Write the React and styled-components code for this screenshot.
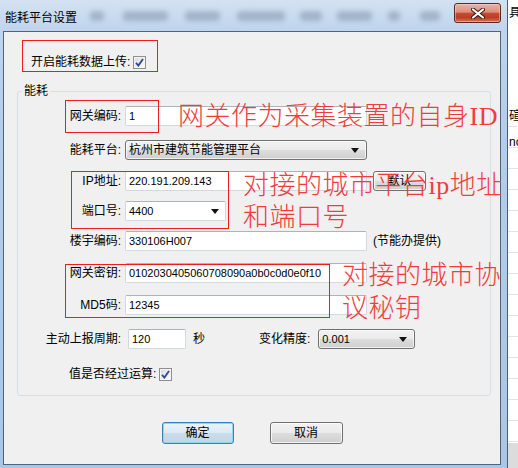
import React from 'react'
import styled, { createGlobalStyle } from 'styled-components'

const GlobalStyle = createGlobalStyle`
  html, body {
    margin: 0;
    padding: 0;
  }
  body {
    width: 518px;
    height: 468px;
    overflow: hidden;
    background: #fff;
  }
`

const UI_FONT = `"Liberation Sans", "Noto Sans CJK SC", sans-serif`
const NOTE_FONT = `"Liberation Serif", "Noto Sans CJK SC", serif`

const Desktop = styled.div`
  position: relative;
  width: 518px;
  height: 468px;
  display: flex;
  overflow: hidden;
  font-family: ${UI_FONT};
  font-size: 12px;
  color: #000;
`

const Window = styled.div`
  flex: none;
  width: 508px;
  height: 468px;
  box-sizing: border-box;
  display: flex;
  flex-direction: column;
  padding: 0 6px 3px 3px;
  border-right: 1px solid #4c5e73;
  background: linear-gradient(180deg, #d3e2f2 0%, #bfd5ed 30px, #b4cdea 120px, #aac6e6 100%);
`

const TitleBar = styled.div`
  flex: none;
  height: 31px;
  display: flex;
  align-items: flex-start;
`

const TitleText = styled.span`
  margin: 10px 0 0 2px;
  font-size: 12px;
  line-height: 16px;
  white-space: nowrap;
`

const Blob = styled.span`
  flex: none;
  width: ${({ $w }) => $w}px;
  margin: 11px 0 0 ${({ $ml }) => $ml}px;
  height: 10px;
  border-radius: 4px;
  background: rgba(55, 70, 95, 0.26);
  filter: blur(2.5px);
`

const CloseButton = styled.div`
  flex: none;
  margin: 3px 0 0 auto;
  width: 47px;
  height: 20px;
  box-sizing: border-box;
  border: 1px solid #5a2a1e;
  border-radius: 3px;
  display: flex;
  align-items: center;
  justify-content: center;
  background: linear-gradient(180deg, #eab3a4 0%, #dc8f7d 45%, #c54a32 52%, #c03c24 75%, #d8735a 100%);
  box-shadow: inset 0 0 0 1px rgba(255, 220, 210, 0.45);
`

const Client = styled.div`
  flex: 1;
  display: flex;
  flex-direction: column;
  border: 1px solid #4f637b;
  background: #f0f0f0;
`

const UploadRow = styled.div`
  display: flex;
  align-items: center;
  height: 16px;
  margin: 22px 0 0 27px;
  gap: 3px;
`

const Text = styled.span`
  font-size: 12px;
  line-height: 16px;
  white-space: nowrap;
`

const CheckBox = styled.span`
  flex: none;
  width: 13px;
  height: 13px;
  box-sizing: border-box;
  border: 1px solid #8e8f8f;
  display: flex;
  align-items: center;
  justify-content: center;
  background: linear-gradient(135deg, #d6d8db 0%, #eef0f2 60%, #fafafa 100%);
  box-shadow: inset 0 0 0 1px #f4f4f4;
`

const GroupBox = styled.fieldset`
  margin: 13px 9px 0 13px;
  padding: 7px 0 11px 0;
  border: 1px solid #d5dfe5;
  border-radius: 3px;
  min-width: 0;
`

const Legend = styled.legend`
  margin-left: 4px;
  padding: 0 2px;
  font-size: 12px;
  line-height: 16px;
`

const Row = styled.div`
  display: flex;
  align-items: center;
  height: 20px;
  margin-top: ${({ $mt }) => $mt || 0}px;
  padding-left: ${({ $pl }) => $pl || 0}px;
`

const Label = styled.span`
  flex: none;
  width: 103px;
  text-align: right;
  font-size: 12px;
  line-height: 16px;
  white-space: nowrap;
`

const Field = styled.div`
  flex: none;
  width: ${({ $w }) => $w}px;
  height: 20px;
  margin-left: ${({ $ml }) => ($ml === undefined ? 4 : $ml)}px;
  box-sizing: border-box;
  display: flex;
  align-items: center;
  justify-content: space-between;
  padding: 0 6px 0 3px;
  background: #fff;
  border: 1px solid #d3d7de;
  border-top-color: #aeb2b9;
  border-radius: 2px;
  font-size: ${({ $cjk }) => ($cjk ? 12 : 11)}px;
  line-height: 16px;
  white-space: nowrap;
  overflow: hidden;
`

const DropList = styled.div`
  flex: none;
  width: ${({ $w }) => $w}px;
  height: 20px;
  margin-left: ${({ $ml }) => ($ml === undefined ? 4 : $ml)}px;
  box-sizing: border-box;
  display: flex;
  align-items: center;
  justify-content: space-between;
  padding: 0 7px 0 3px;
  border: 1px solid #707070;
  border-radius: 3px;
  background: linear-gradient(180deg, #f2f2f2 0%, #ebebeb 50%, #dddddd 51%, #cfcfcf 100%);
  box-shadow: inset 0 0 0 1px rgba(255, 255, 255, 0.7);
  font-size: ${({ $cjk }) => ($cjk ? 12 : 11)}px;
  line-height: 16px;
  white-space: nowrap;
`

const Button = styled.div`
  flex: none;
  width: ${({ $w }) => $w}px;
  height: ${({ $h }) => $h || 21}px;
  margin-left: ${({ $ml }) => $ml || 0}px;
  box-sizing: border-box;
  display: flex;
  align-items: center;
  justify-content: center;
  border: 1px solid ${({ $primary }) => ($primary ? '#3c7fb1' : '#707070')};
  border-radius: 3px;
  background: ${({ $primary }) =>
    $primary
      ? 'linear-gradient(180deg, #eaf4fb 0%, #dde9f2 50%, #cbdce9 51%, #c2d6e6 100%)'
      : 'linear-gradient(180deg, #f2f2f2 0%, #ebebeb 50%, #dddddd 51%, #cfcfcf 100%)'};
  box-shadow: ${({ $primary }) =>
    $primary ? 'inset 0 0 0 1px #8fd3f6' : 'inset 0 0 0 1px rgba(255, 255, 255, 0.75)'};
  font-size: 12px;
  line-height: 16px;
  white-space: nowrap;
`

const Aside = styled.span`
  margin-left: ${({ $ml }) => $ml}px;
  font-size: 12px;
  line-height: 16px;
  white-space: nowrap;
`

const ButtonRow = styled.div`
  display: flex;
  justify-content: center;
  gap: 36px;
  margin-top: 26px;
`

const BackApp = styled.div`
  flex: 1;
  display: flex;
  flex-direction: column;
  background:
    linear-gradient(180deg, transparent 443px, #dcdcdc 443px),
    repeating-linear-gradient(180deg, transparent 0, transparent 20px, #e3e3e3 20px, #e3e3e3 21px) 0 106px / 100% 100% no-repeat,
    #fff;
  font-size: 12px;
  line-height: 14px;
  overflow: hidden;
  white-space: nowrap;
`

const BackCell = styled.span`
  margin-top: ${({ $mt }) => $mt}px;
  padding-left: 1px;
`

const RedBox = styled.div`
  position: absolute;
  left: ${({ $x }) => $x}px;
  top: ${({ $y }) => $y}px;
  width: ${({ $w }) => $w}px;
  height: ${({ $h }) => $h}px;
  box-sizing: border-box;
  border: 1px solid #f01c1c;
  pointer-events: none;
`

const Note = styled.div`
  position: absolute;
  left: ${({ $x }) => $x}px;
  top: ${({ $y }) => $y}px;
  font-family: ${NOTE_FONT};
  font-size: 26px;
  font-weight: 300;
  line-height: ${({ $lh }) => $lh || 32}px;
  letter-spacing: 0.5px;
  color: #f03c3c;
  white-space: nowrap;
  pointer-events: none;
`

const Arrow = () => (
  <svg width="8" height="5" viewBox="0 0 8 5">
    <polygon points="0,0 8,0 4,5" fill="#111" />
  </svg>
)

const Tick = () => (
  <CheckBox>
    <svg width="9" height="9" viewBox="0 0 9 9">
      <path d="M1 4.8 L3.4 7.6 L8 1" fill="none" stroke="#2c4a98" strokeWidth="1.8" />
    </svg>
  </CheckBox>
)

const blobs = [
  { w: 14, ml: 13 },
  { w: 45, ml: 19 },
  { w: 35, ml: 17 },
  { w: 48, ml: 17 },
  { w: 22, ml: 15 },
  { w: 35, ml: 15 },
  { w: 12, ml: 16 },
  { w: 20, ml: 20 },
]

export default function App() {
  return (
    <Desktop>
      <GlobalStyle />
      <Window>
        <TitleBar>
          <TitleText>能耗平台设置</TitleText>
          {blobs.map((b, i) => (
            <Blob key={i} $w={b.w} $ml={b.ml} />
          ))}
          <CloseButton>
            <svg width="14" height="11" viewBox="0 0 14 11">
              <path d="M2 1.5 L12 9.5 M12 1.5 L2 9.5" stroke="#3b1810" strokeWidth="4" strokeLinecap="round" />
              <path d="M2 1.5 L12 9.5 M12 1.5 L2 9.5" stroke="#fff" strokeWidth="2.2" strokeLinecap="round" />
            </svg>
          </CloseButton>
        </TitleBar>

        <Client>
          <UploadRow>
            <Text>开启能耗数据上传:</Text>
            <Tick />
          </UploadRow>

          <GroupBox>
            <Legend>能耗</Legend>

            <Row>
              <Label>网关编码:</Label>
              <Field $w={242}>1</Field>
            </Row>

            <Row $mt={14}>
              <Label>能耗平台:</Label>
              <DropList $w={242} $cjk>
                杭州市建筑节能管理平台
                <Arrow />
              </DropList>
            </Row>

            <Row $mt={11}>
              <Label>IP地址:</Label>
              <Field $w={242}>220.191.209.143</Field>
              <Button $w={53} $h={20} $ml={6}>默认</Button>
            </Row>

            <Row $mt={10}>
              <Label>端口号:</Label>
              <Field $w={101}>
                4400
                <Arrow />
              </Field>
            </Row>

            <Row $mt={10}>
              <Label>楼宇编码:</Label>
              <Field $w={242}>330106H007</Field>
              <Aside $ml={6}>(节能办提供)</Aside>
            </Row>

            <Row $mt={12}>
              <Label>网关密钥:</Label>
              <Field $w={242}>0102030405060708090a0b0c0d0e0f10</Field>
            </Row>

            <Row $mt={12}>
              <Label>MD5码:</Label>
              <Field $w={242}>12345</Field>
            </Row>

            <Row $mt={14}>
              <Label>主动上报周期:</Label>
              <Field $w={58} $ml={7}>120</Field>
              <Aside $ml={7}>秒</Aside>
              <Aside $ml={54}>变化精度:</Aside>
              <DropList $w={97} $ml={8}>
                0.001
                <Arrow />
              </DropList>
            </Row>

            <Row $mt={15} $pl={51}>
              <Text>值是否经过运算:</Text>
              <Aside $ml={3}>
                <Tick />
              </Aside>
            </Row>
          </GroupBox>

          <ButtonRow>
            <Button $w={72} $h={22} $primary>确定</Button>
            <Button $w={73} $h={22}>取消</Button>
          </ButtonRow>
        </Client>
      </Window>

      <BackApp>
        <BackCell $mt={6}>具</BackCell>
        <BackCell $mt={89}>碹</BackCell>
        <BackCell $mt={12}>nc</BackCell>
      </BackApp>

      <RedBox $x={22} $y={40} $w={136} $h={32} />
      <RedBox $x={65} $y={100} $w={94} $h={33} />
      <RedBox $x={71} $y={171} $w={158} $h={58} />
      <RedBox $x={65} $y={264} $w={265} $h={54} />

      <Note $x={178} $y={101}>网关作为采集装置的自身ID</Note>
      <Note $x={243} $y={170}>
        对接的城市平台ip地址
        <br />
        和端口号
      </Note>
      <Note $x={342} $y={259} $lh={33}>
        对接的城市协
        <br />
        议秘钥
      </Note>
    </Desktop>
  )
}
